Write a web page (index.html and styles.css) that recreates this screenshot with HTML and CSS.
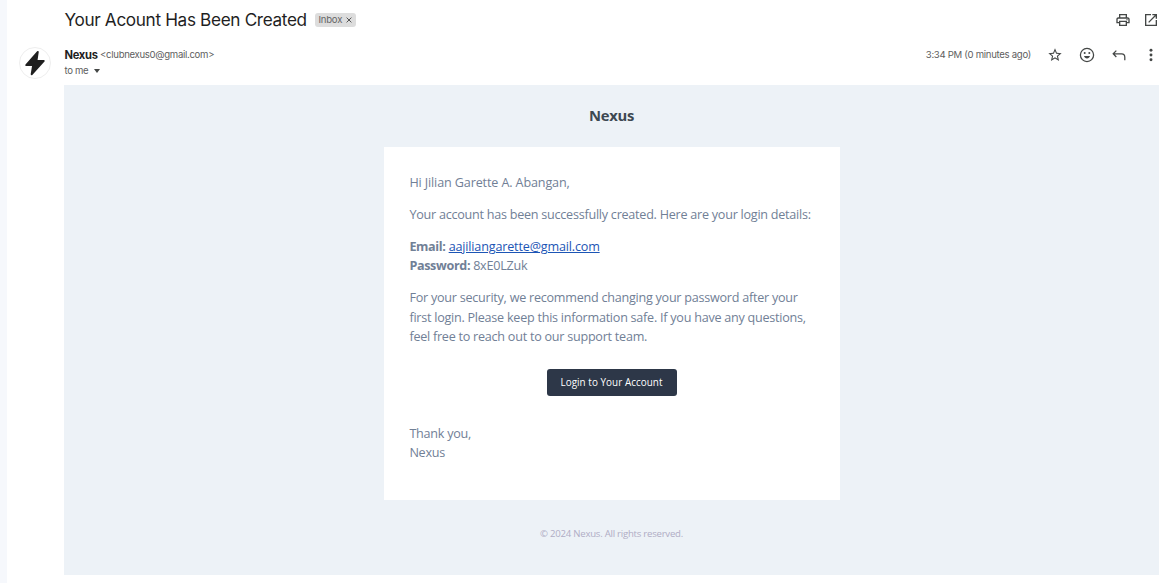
FILE: index.html
```html
<!DOCTYPE html>
<html lang="en">
<head>
<meta charset="utf-8">
<title>Your Acount Has Been Created</title>
<link rel="stylesheet" href="styles.css">
</head>
<body>
<div class="mail">
  <header class="subject-bar">
    <h1 class="subject">Your Acount Has Been Created</h1>
    <span class="label">Inbox<svg class="label-x" viewBox="0 0 6 6"><path d="M.6.6l4.8 4.8M5.4.6L.6 5.4"/></svg></span>
    <div class="tools">
      <svg class="icon" viewBox="0 0 24 24"><path d="M19 8h-1V3H6v5H5c-1.660 0-3 1.340-3 3v6h4v4h12v-4h4v-6c0-1.660-1.340-3-3-3zM8 5h8v3H8V5zm8 12v2H8v-4h8v2zm2-2v-2H6v2H4v-4c0-.55.45-1 1-1h14c.55 0 1 .45 1 1v4h-2z"/><circle cx="18" cy="11.500" r="1"/></svg>
      <svg class="icon" viewBox="0 0 24 24"><path d="M19 19H5V5h7V3H3v18h18v-9h-2v7zM14 3v2h3.600l-9.830 9.830 1.410 1.410L19 6.410V10h2V3h-7z"/></svg>
    </div>
  </header>
  <section class="sender-bar">
    <div class="avatar"><svg viewBox="0 0 32 32"><path d="M19 4.200L6.600 18.200h7.400L12.400 28 25.400 13.700h-7.800z"/></svg></div>
    <div class="sender">
      <div class="from"><b class="name">Nexus</b><span>&lt;clubnexus0@gmail.com&gt;</span></div>
      <div class="to"><span>to me</span><i class="caret"></i></div>
    </div>
    <div class="meta">
      <span class="time">3:34 PM (0 minutes ago)</span>
      <svg class="icon" viewBox="0 0 24 24"><path d="M22 9.240l-7.190-.62L12 2 9.190 8.630 2 9.240l5.460 4.730L5.820 21 12 17.270 18.180 21l-1.630-7.030L22 9.240zM12 15.400l-3.760 2.270 1-4.280-3.320-2.880 4.380-.38L12 6.100l1.710 4.040 4.380.38-3.320 2.880 1 4.280L12 15.400z"/></svg>
      <svg class="icon" viewBox="0 0 24 24"><circle class="line" cx="12" cy="12" r="9.900"/><circle cx="8.500" cy="9" r="1.500"/><circle cx="15.500" cy="9" r="1.500"/><path d="M7.500 13.500h9c-.7 2.300-2.400 3.700-4.500 3.700s-3.800-1.400-4.500-3.700z"/></svg>
      <svg class="icon" viewBox="0 0 24 24"><path class="line" d="M8 5.500L3.300 10.200 8 14.900M3.500 10.200H16c3 0 4.700 2 4.700 5V20"/></svg>
      <svg class="icon" viewBox="0 0 24 24"><circle cx="12" cy="5" r="2.200"/><circle cx="12" cy="12" r="2.200"/><circle cx="12" cy="19" r="2.200"/></svg>
    </div>
  </section>
  <main class="body">
    <h2 class="brand">Nexus</h2>
    <article class="card">
      <p class="greeting">Hi Jilian Garette A. Abangan,</p>
      <p>Your account has been successfully created. Here are your login details:</p>
      <p><b>Email:</b> <a class="link">aajiliangarette@gmail.com</a><br><b>Password:</b> 8xE0LZuk</p>
      <p>For your security, we recommend changing your password after your<br>first login. Please keep this information safe. If you have any questions,<br>feel free to reach out to our support team.</p>
      <div class="action"><a class="button">Login to Your Account</a></div>
      <p>Thank you,<br>Nexus</p>
    </article>
    <footer class="legal">© 2024 Nexus. All rights reserved.</footer>
  </main>
</div>
</body>
</html>
```
FILE: styles.css
```css
* { box-sizing: border-box; }
body { margin: 0; background: #f6f8fc; font-family: "Open Sans", sans-serif; }
.mail { height: 583px; margin-left: 7px; background: #fff; display: flex; flex-direction: column; }
.icon { width: 16px; height: 16px; fill: #444746; display: block; }
.line { fill: none; stroke: #444746; stroke-width: 1.900; }
.subject-bar { height: 40px; padding: 0 11px 0 57.500px; display: flex; align-items: center; }
.subject { margin: 0; width: 243px; font: 400 17.200px/24px Inter, sans-serif; letter-spacing: -.35px; color: #1f1f1f; white-space: nowrap; }
.label { margin-left: 7.500px; width: 41px; height: 14px; padding: 0 4px 0 3.500px; display: flex; align-items: center; justify-content: space-between; background: #ddd; border-radius: 3px; font: 9.600px/14px Inter, sans-serif; letter-spacing: -.25px; color: #666; }
.label-x { width: 6px; height: 6px; stroke: #555; fill: none; }
.tools { margin-left: auto; display: flex; gap: 12px; }
.sender-bar { height: 45px; padding: 0 11px 0 12px; display: flex; }
.avatar { width: 32px; height: 32px; margin-top: 7px; border: 1px solid #eee; border-radius: 50%; }
.avatar svg { display: block; width: 30px; height: 30px; fill: #1f1f1f; stroke: #1f1f1f; stroke-linejoin: round; stroke-width: 2; }
.sender { margin-left: 13.500px; padding-top: 7px; font: 9.600px/16px Inter, sans-serif; letter-spacing: -.32px; color: #5e5e5e; }
.from { display: flex; gap: 2.500px; }
.name { font-size: 11.200px; color: #1f1f1f; }
.to { display: flex; align-items: center; gap: 5.500px; }
.caret { border: 3.500px solid transparent; border-top: 4px solid #444746; border-bottom: 0; }
.meta { margin-left: auto; height: 30px; display: flex; align-items: center; gap: 16px; font: 9.600px/16px Inter, sans-serif; letter-spacing: -.3px; color: #5e5e5e; }
.body { height: 490px; margin: 0 11px 0 57px; background: #edf2f7; display: flex; flex-direction: column; align-items: center; }
.brand { margin: 19px 0 0; font-size: 14.800px; letter-spacing: -.3px; line-height: 22px; height: 43px; color: #3d4852; }
.card { width: 456px; height: 353px; padding: 26px 25.500px; background: #fff; font-size: 12.600px; letter-spacing: -.25px; line-height: 19.400px; color: #718096; white-space: nowrap; }
.card p { margin: 0 0 12.500px .4px; }
.card .greeting { letter-spacing: -.13px; }
.card b { letter-spacing: -.35px; }
.link { letter-spacing: -.17px; color: #1c55b5; text-decoration: underline; }
.action { display: flex; justify-content: center; margin: 23px 0 27.500px; }
.button { width: 130px; height: 27px; display: flex; align-items: center; justify-content: center; background: #2d3748; border-radius: 3px; color: #fff; font-size: 9.900px; font-weight: 500; letter-spacing: .05px; }
.legal { padding-top: 25px; font-size: 9.600px; letter-spacing: -.24px; line-height: 18px; color: #b0adc5; }
```
